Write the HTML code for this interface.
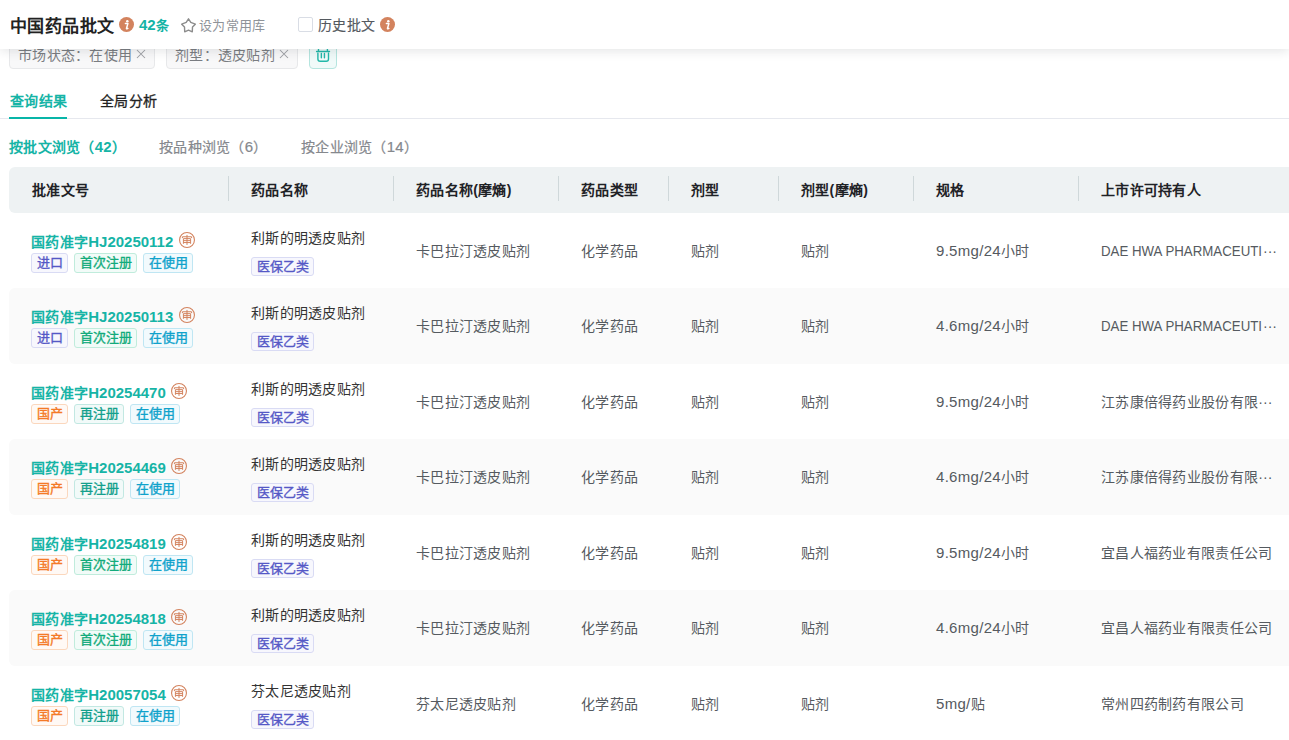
<!DOCTYPE html>
<html lang="zh-CN">
<head>
<meta charset="utf-8">
<style>
*{box-sizing:border-box;margin:0;padding:0}
html,body{width:1289px;height:740px;overflow:hidden;background:#fff}
body{font-family:"Liberation Sans",sans-serif;color:#333;position:relative;letter-spacing:.3px}
.med{-webkit-text-stroke:.25px currentColor}
.abs{position:absolute;white-space:nowrap}
.hdr{position:absolute;left:0;top:0;width:1289px;height:49px;background:#fff;z-index:5;box-shadow:0 2px 10px rgba(30,40,50,.12)}
.title{left:10px;top:14.5px;font-size:17px;letter-spacing:.45px;line-height:24px;font-weight:bold;color:#222}
.info{position:absolute;width:15px;height:15px;border-radius:50%;background:#d3835e}
.cnt{left:139px;top:15px;font-size:14px;line-height:20px;font-weight:bold;color:#13b3a5}
.fav{left:199px;top:17px;font-size:13px;line-height:18px;color:#8f9399}
.chk{position:absolute;left:298px;top:17px;width:15px;height:15px;border:1px solid #d9dde5;border-radius:2px;background:#fff}
.hist{left:318px;top:15px;font-size:14px;line-height:20px;-webkit-text-stroke:.15px currentColor;color:#54595f}
.tag{position:absolute;top:37px;height:32px;border:1px solid #e7e8ea;border-radius:4px;background:#f8f8f9;font-size:14px;color:#7a7d82;line-height:34px;padding-left:8px;white-space:nowrap}
.del{position:absolute;left:309px;top:37px;width:28px;height:32px;border:1px solid #b5e5df;border-radius:4px;background:#f0faf9}
.tab1{left:10px;top:91px;font-size:14px;line-height:20px;font-weight:bold;color:#16b4a6}
.tab2{left:100px;top:91px;font-size:14px;line-height:20px;-webkit-text-stroke:.3px currentColor;color:#222}
.tabline{position:absolute;left:0;top:118px;width:1289px;height:1px;background:#e6e8ee}
.tabul{position:absolute;left:9px;top:117px;width:58px;height:2px;background:#08b5a8}
.st{top:137px;font-size:14px;line-height:20px}
.st1{left:9px;color:#16b4a6;font-weight:bold}
.st2{left:159px;color:#85888d;-webkit-text-stroke:.2px currentColor}
.st3{left:301px;color:#85888d;-webkit-text-stroke:.2px currentColor}
.thead{position:absolute;left:9px;top:167px;width:1300px;height:46px;background:#eef2f3;border-radius:6px}
.th{position:absolute;top:0;height:46px;line-height:46px;font-size:14px;font-weight:bold;color:#1f2226;white-space:nowrap}
.sep{position:absolute;top:9px;width:1px;height:25px;background:#cfd8da}
.row{position:absolute;left:9px;width:1300px;height:75.5px;border-radius:6px}
.row.g{background:#fafafa}
.c{position:absolute;font-size:14px;line-height:20px;white-space:nowrap}
.pzwh{font-weight:bold;color:#16b4a6}
.lat{font-size:15px;letter-spacing:0}
.lat3{font-size:15px}
.seal{display:inline-block;vertical-align:top;margin-left:5.5px;margin-top:0;height:16px;letter-spacing:0}
.tg{letter-spacing:0;display:inline-block;vertical-align:top;height:20px;line-height:18px;border:1px solid;border-radius:3px;font-size:13px;-webkit-text-stroke:.35px currentColor;padding:0 4.5px;margin-right:6px}
.t-jk{color:#5558c6;background:#f7f7fd;border-color:#d9dbf4}
.t-gc{color:#f47a27;background:#fff9f5;border-color:#fbd7bd}
.t-sc{color:#12ab7b;background:#f2fbf8;border-color:#c0ecdc}
.t-zc{color:#14a08c;background:#f2faf9;border-color:#c2e8e2}
.t-zsy{color:#10a2cb;background:#f2fafd;border-color:#bfe6f3}
.t-yb{color:#5558c6;background:#f7f7fd;border-color:#d9dbf4;height:19px;line-height:17px}
.nm{color:#333}
.v{top:27.5px;color:#555a60}
.lat2{display:inline-block;vertical-align:top;font-size:15px;letter-spacing:0;transform:scaleX(.885);transform-origin:0 50%;width:162px}
.ell{letter-spacing:0}
</style>
</head>
<body>
<div class="hdr">
  <div class="abs title">中国药品批文</div>
  <div class="info" style="left:119px;top:17px"><svg width="15" height="15" viewBox="0 0 15 15" style="position:absolute;left:0;top:0"><circle cx="8.3" cy="4.3" r="1.25" fill="#fff"/><path d="M6.4 6.6 H8.9 L7.5 11.2 Q7.3 11.9 8 11.7 L8.9 11.4" fill="none" stroke="#fff" stroke-width="1.5" stroke-linecap="round" stroke-linejoin="round"/></svg></div>
  <div class="abs cnt"><span class="lat">42</span><span style="font-size:13px">条</span></div>
  <svg class="abs" style="left:179px;top:16px" width="20" height="20" viewBox="0 0 20 20"><path d="M9.5 2.8 L11.8 6.4 L16.3 8.2 L13.5 11 L13.3 15.8 L9.5 14.2 L5.7 15.8 L5.5 11 L2.7 8.2 L7.2 6.4 Z" fill="none" stroke="#8c8c8c" stroke-width="1.4" stroke-linejoin="round"/></svg>
  <div class="abs fav">设为常用库</div>
  <div class="chk"></div>
  <div class="abs hist">历史批文</div>
  <div class="info" style="left:380px;top:17px"><svg width="15" height="15" viewBox="0 0 15 15" style="position:absolute;left:0;top:0"><circle cx="8.3" cy="4.3" r="1.25" fill="#fff"/><path d="M6.4 6.6 H8.9 L7.5 11.2 Q7.3 11.9 8 11.7 L8.9 11.4" fill="none" stroke="#fff" stroke-width="1.5" stroke-linecap="round" stroke-linejoin="round"/></svg></div>
</div>

<div class="tag" style="left:9px;width:146px">市场状态：在使用<svg style="position:absolute;left:126px;top:11px" width="10" height="10" viewBox="0 0 10 10"><path d="M1 1 L9 9 M9 1 L1 9" stroke="#9c9fa3" stroke-width="1.05"/></svg></div>
<div class="tag" style="left:166px;width:132px">剂型：透皮贴剂<svg style="position:absolute;left:112px;top:11px" width="10" height="10" viewBox="0 0 10 10"><path d="M1 1 L9 9 M9 1 L1 9" stroke="#9c9fa3" stroke-width="1.05"/></svg></div>
<div class="del"></div>
<svg style="position:absolute;left:306px;top:46px" width="34" height="26" viewBox="0 0 34 26"><path d="M10.6 5.45 H23.5 M12.5 1 V5.45 M21.4 1 V5.45 M11.9 7.2 V13.1 Q11.9 15.3 14.1 15.3 H20.3 Q22.5 15.3 22.5 13.1 V7.2 M15.35 7.4 V11.8 M18.44 7.4 V11.8" fill="none" stroke="#22b8a9" stroke-width="1.4" stroke-linecap="round"/></svg>

<div class="abs tab1">查询结果</div>
<div class="abs tab2">全局分析</div>
<div class="tabline"></div>
<div class="tabul"></div>

<div class="abs st st1">按批文浏览（<span class="lat">42</span>）</div>
<div class="abs st st2">按品种浏览（<span class="lat">6</span>）</div>
<div class="abs st st3">按企业浏览（<span class="lat">14</span>）</div>

<div class="thead">
  <div class="th" style="left:23px">批准文号</div>
  <div class="sep" style="left:219px"></div>
  <div class="th" style="left:242px">药品名称</div>
  <div class="sep" style="left:384px"></div>
  <div class="th" style="left:407px">药品名称(摩熵)</div>
  <div class="sep" style="left:549px"></div>
  <div class="th" style="left:572px">药品类型</div>
  <div class="sep" style="left:659px"></div>
  <div class="th" style="left:682px">剂型</div>
  <div class="sep" style="left:769px"></div>
  <div class="th" style="left:792px">剂型(摩熵)</div>
  <div class="sep" style="left:904px"></div>
  <div class="th" style="left:927px">规格</div>
  <div class="sep" style="left:1069px"></div>
  <div class="th" style="left:1092px">上市许可持有人</div>
</div>

<div id="rows">
<div class="row" style="top:213px;height:75px">
  <div class="c pzwh" style="left:22px;top:19px">国药准字<span class="lat">HJ20250112</span><span class="seal"><svg width="16" height="16" viewBox="0 0 16 16"><circle cx="8" cy="8" r="7.45" fill="none" stroke="#d3835e" stroke-width="1.1"/><path d="M8 2.9 V12.9 M3.4 6.1 V4.75 H12.6 V6.1 M4.4 11.8 V6.65 H11.6 V11.8 M4.4 8.65 H11.6 M4.4 10.55 H11.6" fill="none" stroke="#d3835e" stroke-width="1"/></svg></span></div>
  <div class="c" style="left:22px;top:40px"><span class="tg t-jk">进口</span><span class="tg t-sc">首次注册</span><span class="tg t-zsy">在使用</span></div>
  <div class="c nm" style="left:242px;top:15px">利斯的明透皮贴剂</div>
  <div class="c" style="left:242px;top:44px"><span class="tg t-yb">医保乙类</span></div>
  <div class="c v" style="left:407px">卡巴拉汀透皮贴剂</div>
  <div class="c v" style="left:572px">化学药品</div>
  <div class="c v" style="left:682px">贴剂</div>
  <div class="c v" style="left:792px">贴剂</div>
  <div class="c v" style="left:927px"><span class="lat3">9.5mg/24</span>小时</div>
  <div class="c v" style="left:1092px"><span class="lat2">DAE HWA PHARMACEUTI</span><span class="ell">···</span></div>
</div>
<div class="row g" style="top:288px;height:76px">
  <div class="c pzwh" style="left:22px;top:19px">国药准字<span class="lat">HJ20250113</span><span class="seal"><svg width="16" height="16" viewBox="0 0 16 16"><circle cx="8" cy="8" r="7.45" fill="none" stroke="#d3835e" stroke-width="1.1"/><path d="M8 2.9 V12.9 M3.4 6.1 V4.75 H12.6 V6.1 M4.4 11.8 V6.65 H11.6 V11.8 M4.4 8.65 H11.6 M4.4 10.55 H11.6" fill="none" stroke="#d3835e" stroke-width="1"/></svg></span></div>
  <div class="c" style="left:22px;top:40px"><span class="tg t-jk">进口</span><span class="tg t-sc">首次注册</span><span class="tg t-zsy">在使用</span></div>
  <div class="c nm" style="left:242px;top:15px">利斯的明透皮贴剂</div>
  <div class="c" style="left:242px;top:44px"><span class="tg t-yb">医保乙类</span></div>
  <div class="c v" style="left:407px">卡巴拉汀透皮贴剂</div>
  <div class="c v" style="left:572px">化学药品</div>
  <div class="c v" style="left:682px">贴剂</div>
  <div class="c v" style="left:792px">贴剂</div>
  <div class="c v" style="left:927px"><span class="lat3">4.6mg/24</span>小时</div>
  <div class="c v" style="left:1092px"><span class="lat2">DAE HWA PHARMACEUTI</span><span class="ell">···</span></div>
</div>
<div class="row" style="top:364px;height:75px">
  <div class="c pzwh" style="left:22px;top:19px">国药准字<span class="lat">H20254470</span><span class="seal"><svg width="16" height="16" viewBox="0 0 16 16"><circle cx="8" cy="8" r="7.45" fill="none" stroke="#d3835e" stroke-width="1.1"/><path d="M8 2.9 V12.9 M3.4 6.1 V4.75 H12.6 V6.1 M4.4 11.8 V6.65 H11.6 V11.8 M4.4 8.65 H11.6 M4.4 10.55 H11.6" fill="none" stroke="#d3835e" stroke-width="1"/></svg></span></div>
  <div class="c" style="left:22px;top:40px"><span class="tg t-gc">国产</span><span class="tg t-zc">再注册</span><span class="tg t-zsy">在使用</span></div>
  <div class="c nm" style="left:242px;top:15px">利斯的明透皮贴剂</div>
  <div class="c" style="left:242px;top:44px"><span class="tg t-yb">医保乙类</span></div>
  <div class="c v" style="left:407px">卡巴拉汀透皮贴剂</div>
  <div class="c v" style="left:572px">化学药品</div>
  <div class="c v" style="left:682px">贴剂</div>
  <div class="c v" style="left:792px">贴剂</div>
  <div class="c v" style="left:927px"><span class="lat3">9.5mg/24</span>小时</div>
  <div class="c v" style="left:1092px">江苏康倍得药业股份有限<span class="ell">···</span></div>
</div>
<div class="row g" style="top:439px;height:76px">
  <div class="c pzwh" style="left:22px;top:19px">国药准字<span class="lat">H20254469</span><span class="seal"><svg width="16" height="16" viewBox="0 0 16 16"><circle cx="8" cy="8" r="7.45" fill="none" stroke="#d3835e" stroke-width="1.1"/><path d="M8 2.9 V12.9 M3.4 6.1 V4.75 H12.6 V6.1 M4.4 11.8 V6.65 H11.6 V11.8 M4.4 8.65 H11.6 M4.4 10.55 H11.6" fill="none" stroke="#d3835e" stroke-width="1"/></svg></span></div>
  <div class="c" style="left:22px;top:40px"><span class="tg t-gc">国产</span><span class="tg t-zc">再注册</span><span class="tg t-zsy">在使用</span></div>
  <div class="c nm" style="left:242px;top:15px">利斯的明透皮贴剂</div>
  <div class="c" style="left:242px;top:44px"><span class="tg t-yb">医保乙类</span></div>
  <div class="c v" style="left:407px">卡巴拉汀透皮贴剂</div>
  <div class="c v" style="left:572px">化学药品</div>
  <div class="c v" style="left:682px">贴剂</div>
  <div class="c v" style="left:792px">贴剂</div>
  <div class="c v" style="left:927px"><span class="lat3">4.6mg/24</span>小时</div>
  <div class="c v" style="left:1092px">江苏康倍得药业股份有限<span class="ell">···</span></div>
</div>
<div class="row" style="top:515px;height:75px">
  <div class="c pzwh" style="left:22px;top:19px">国药准字<span class="lat">H20254819</span><span class="seal"><svg width="16" height="16" viewBox="0 0 16 16"><circle cx="8" cy="8" r="7.45" fill="none" stroke="#d3835e" stroke-width="1.1"/><path d="M8 2.9 V12.9 M3.4 6.1 V4.75 H12.6 V6.1 M4.4 11.8 V6.65 H11.6 V11.8 M4.4 8.65 H11.6 M4.4 10.55 H11.6" fill="none" stroke="#d3835e" stroke-width="1"/></svg></span></div>
  <div class="c" style="left:22px;top:40px"><span class="tg t-gc">国产</span><span class="tg t-sc">首次注册</span><span class="tg t-zsy">在使用</span></div>
  <div class="c nm" style="left:242px;top:15px">利斯的明透皮贴剂</div>
  <div class="c" style="left:242px;top:44px"><span class="tg t-yb">医保乙类</span></div>
  <div class="c v" style="left:407px">卡巴拉汀透皮贴剂</div>
  <div class="c v" style="left:572px">化学药品</div>
  <div class="c v" style="left:682px">贴剂</div>
  <div class="c v" style="left:792px">贴剂</div>
  <div class="c v" style="left:927px"><span class="lat3">9.5mg/24</span>小时</div>
  <div class="c v" style="left:1092px">宜昌人福药业有限责任公司</div>
</div>
<div class="row g" style="top:590px;height:76px">
  <div class="c pzwh" style="left:22px;top:19px">国药准字<span class="lat">H20254818</span><span class="seal"><svg width="16" height="16" viewBox="0 0 16 16"><circle cx="8" cy="8" r="7.45" fill="none" stroke="#d3835e" stroke-width="1.1"/><path d="M8 2.9 V12.9 M3.4 6.1 V4.75 H12.6 V6.1 M4.4 11.8 V6.65 H11.6 V11.8 M4.4 8.65 H11.6 M4.4 10.55 H11.6" fill="none" stroke="#d3835e" stroke-width="1"/></svg></span></div>
  <div class="c" style="left:22px;top:40px"><span class="tg t-gc">国产</span><span class="tg t-sc">首次注册</span><span class="tg t-zsy">在使用</span></div>
  <div class="c nm" style="left:242px;top:15px">利斯的明透皮贴剂</div>
  <div class="c" style="left:242px;top:44px"><span class="tg t-yb">医保乙类</span></div>
  <div class="c v" style="left:407px">卡巴拉汀透皮贴剂</div>
  <div class="c v" style="left:572px">化学药品</div>
  <div class="c v" style="left:682px">贴剂</div>
  <div class="c v" style="left:792px">贴剂</div>
  <div class="c v" style="left:927px"><span class="lat3">4.6mg/24</span>小时</div>
  <div class="c v" style="left:1092px">宜昌人福药业有限责任公司</div>
</div>
<div class="row" style="top:666px;height:75px">
  <div class="c pzwh" style="left:22px;top:19px">国药准字<span class="lat">H20057054</span><span class="seal"><svg width="16" height="16" viewBox="0 0 16 16"><circle cx="8" cy="8" r="7.45" fill="none" stroke="#d3835e" stroke-width="1.1"/><path d="M8 2.9 V12.9 M3.4 6.1 V4.75 H12.6 V6.1 M4.4 11.8 V6.65 H11.6 V11.8 M4.4 8.65 H11.6 M4.4 10.55 H11.6" fill="none" stroke="#d3835e" stroke-width="1"/></svg></span></div>
  <div class="c" style="left:22px;top:40px"><span class="tg t-gc">国产</span><span class="tg t-zc">再注册</span><span class="tg t-zsy">在使用</span></div>
  <div class="c nm" style="left:242px;top:15px">芬太尼透皮贴剂</div>
  <div class="c" style="left:242px;top:44px"><span class="tg t-yb">医保乙类</span></div>
  <div class="c v" style="left:407px">芬太尼透皮贴剂</div>
  <div class="c v" style="left:572px">化学药品</div>
  <div class="c v" style="left:682px">贴剂</div>
  <div class="c v" style="left:792px">贴剂</div>
  <div class="c v" style="left:927px"><span class="lat3">5mg/</span>贴</div>
  <div class="c v" style="left:1092px">常州四药制药有限公司</div>
</div>
</div>
</body>
</html>
